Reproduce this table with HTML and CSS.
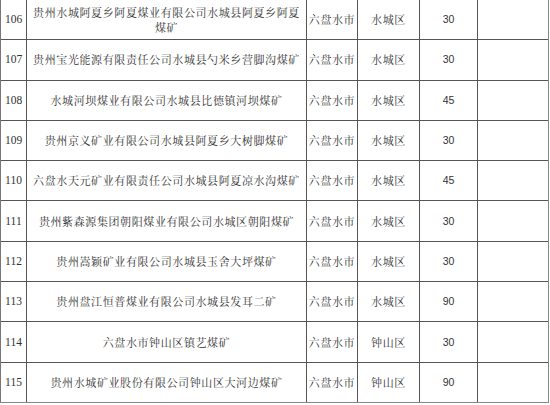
FILE: index.html
```html
<!DOCTYPE html>
<html lang="zh-CN">
<head>
<meta charset="utf-8">
<link rel="stylesheet" href="styles.css">
</head>
<body>
<div class="sheet">
  <div class="c idx">106</div><div class="c name"><p class="t">贵州水城阿夏乡阿夏煤业有限公司水城县阿夏乡阿夏<br>煤矿</p></div><div class="c city">六盘水市</div><div class="c dist">水城区</div><div class="c num">30</div><div class="c blank"></div>
  <div class="c idx">107</div><div class="c name"><p class="t">贵州宝光能源有限责任公司水城县勺米乡营脚沟煤矿</p></div><div class="c city">六盘水市</div><div class="c dist">水城区</div><div class="c num">30</div><div class="c blank"></div>
  <div class="c idx">108</div><div class="c name"><p class="t">水城河坝煤业有限公司水城县比德镇河坝煤矿</p></div><div class="c city">六盘水市</div><div class="c dist">水城区</div><div class="c num">45</div><div class="c blank"></div>
  <div class="c idx">109</div><div class="c name"><p class="t">贵州京义矿业有限公司水城县阿夏乡大树脚煤矿</p></div><div class="c city">六盘水市</div><div class="c dist">水城区</div><div class="c num">30</div><div class="c blank"></div>
  <div class="c idx">110</div><div class="c name"><p class="t">六盘水天元矿业有限责任公司水城县阿夏凉水沟煤矿</p></div><div class="c city">六盘水市</div><div class="c dist">水城区</div><div class="c num">45</div><div class="c blank"></div>
  <div class="c idx">111</div><div class="c name"><p class="t">贵州紫森源集团朝阳煤业有限公司水城区朝阳煤矿</p></div><div class="c city">六盘水市</div><div class="c dist">水城区</div><div class="c num">30</div><div class="c blank"></div>
  <div class="c idx">112</div><div class="c name"><p class="t">贵州嵩颖矿业有限公司水城县玉舍大坪煤矿</p></div><div class="c city">六盘水市</div><div class="c dist">水城区</div><div class="c num">30</div><div class="c blank"></div>
  <div class="c idx">113</div><div class="c name"><p class="t">贵州盘江恒普煤业有限公司水城县发耳二矿</p></div><div class="c city">六盘水市</div><div class="c dist">水城区</div><div class="c num">90</div><div class="c blank"></div>
  <div class="c idx">114</div><div class="c name"><p class="t">六盘水市钟山区镇艺煤矿</p></div><div class="c city">六盘水市</div><div class="c dist">钟山区</div><div class="c num">30</div><div class="c blank"></div>
  <div class="c idx">115</div><div class="c name"><p class="t">贵州水城矿业股份有限公司钟山区大河边煤矿</p></div><div class="c city">六盘水市</div><div class="c dist">钟山区</div><div class="c num">90</div><div class="c blank"></div>
</div>
</body>
</html>
```
FILE: styles.css
```css
html, body {
  margin: 0;
  padding: 0;
  background: #ffffff;
}
body {
  overflow: hidden;
}
.sheet {
  display: grid;
  grid-template-columns: 25px 279px 50px 61px 57px 70px;
  grid-auto-rows: 39.3px;
  gap: 1px;
  background: #555555;
  border-left: 1px solid #777777;
  border-right: 1px solid #888888;
  border-bottom: 1px solid #888888;
  width: max-content;
  margin-top: -1px;
  padding-top: 1px;
  font-family: "Noto Serif CJK SC", "Noto Sans CJK SC", serif;
  color: #333333;
}
.c {
  background: #ffffff;
  display: flex;
  align-items: center;
  justify-content: center;
  text-align: center;
  font-size: 11px;
  letter-spacing: 0.6px;
  line-height: 15px;
}
.idx {
  font-family: "Liberation Serif", serif;
  font-size: 11.5px;
  letter-spacing: 0;
}
.name {
  padding: 0 2px;
}
.t {
  margin: 0;
  width: 100%;
  text-align: center;
}
.num {
  font-family: "Liberation Sans", sans-serif;
  font-size: 10.5px;
  letter-spacing: 0;
}
```
